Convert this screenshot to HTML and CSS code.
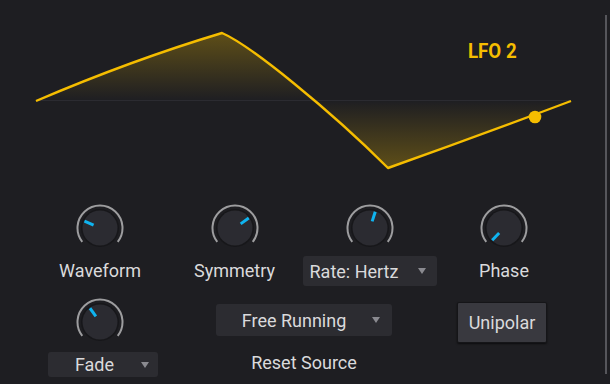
FILE: index.html
```html
<!DOCTYPE html>
<html>
<head>
<meta charset="utf-8">
<link rel="stylesheet" href="styles.css">
</head>
<body>
<div class="panel">
  <div class="graph">
    <svg class="wave" width="605" height="189" viewBox="0 15 605 189">
      <defs>
        <linearGradient id="fillGrad" gradientUnits="userSpaceOnUse" x1="0" y1="33" x2="0" y2="168">
          <stop offset="0" stop-color="#f5c000" stop-opacity="0.30"/>
          <stop offset="0.5" stop-color="#f5c000" stop-opacity="0"/>
          <stop offset="1" stop-color="#f5c000" stop-opacity="0.30"/>
        </linearGradient>
      </defs>
      <line x1="36" y1="100.5" x2="571" y2="100.5" stroke="#2b2b31" stroke-width="1.2"/>
      <path d="M36,101 Q132,60 222,33 C250,45 330,110 388,168 Q478,136 571,101 Z" fill="url(#fillGrad)" stroke="none"/>
      <path d="M36,101 Q132,60 222,33 C250,45 330,110 388,168 Q478,136 571,101" fill="none" stroke="#f5bd00" stroke-width="2.4" stroke-linejoin="round"/>
      <circle cx="535" cy="117" r="6.3" fill="#f5bd00"/>
    </svg>
    <div class="title">LFO 2</div>
  </div>

  <div class="controls">
    <div class="cell c1 r1">
      <svg class="knob" width="48" height="48" viewBox="0 0 48 48">
        <path d="M6.27,37.86 A22.5,22.5 0 1 1 41.73,37.86" fill="none" stroke="#9d9d9f" stroke-width="2"/>
        <circle cx="24" cy="24" r="19" fill="#17171a"/>
        <circle cx="24" cy="24" r="17.5" fill="#2b2b31"/>
        <line x1="24" y1="17" x2="24" y2="7" stroke="#0fb4f0" stroke-width="3" transform="rotate(-66 24 24)"/>
      </svg>
    </div>
    <div class="cell c2 r1">
      <svg class="knob" width="48" height="48" viewBox="0 0 48 48">
        <path d="M6.27,37.86 A22.5,22.5 0 1 1 41.73,37.86" fill="none" stroke="#9d9d9f" stroke-width="2"/>
        <circle cx="24" cy="24" r="19" fill="#17171a"/>
        <circle cx="24" cy="24" r="17.5" fill="#2b2b31"/>
        <line x1="24" y1="17" x2="24" y2="7" stroke="#0fb4f0" stroke-width="3" transform="rotate(54 24 24)"/>
      </svg>
    </div>
    <div class="cell c3 r1">
      <svg class="knob" width="48" height="48" viewBox="0 0 48 48">
        <path d="M6.27,37.86 A22.5,22.5 0 1 1 41.73,37.86" fill="none" stroke="#9d9d9f" stroke-width="2"/>
        <circle cx="24" cy="24" r="19" fill="#17171a"/>
        <circle cx="24" cy="24" r="17.5" fill="#2b2b31"/>
        <line x1="24" y1="17" x2="24" y2="7" stroke="#0fb4f0" stroke-width="3" transform="rotate(18 24 24)"/>
      </svg>
    </div>
    <div class="cell c4 r1">
      <svg class="knob" width="48" height="48" viewBox="0 0 48 48">
        <path d="M6.27,37.86 A22.5,22.5 0 1 1 41.73,37.86" fill="none" stroke="#9d9d9f" stroke-width="2"/>
        <circle cx="24" cy="24" r="19" fill="#17171a"/>
        <circle cx="24" cy="24" r="17.5" fill="#2b2b31"/>
        <line x1="24" y1="17" x2="24" y2="7" stroke="#0fb4f0" stroke-width="3" transform="rotate(-136 24 24)"/>
      </svg>
    </div>

    <div class="cell c1 r2 label">Waveform</div>
    <div class="cell c2 r2 label">Symmetry</div>
    <div class="cell c3 r2">
      <div class="dropdown rate"><span class="dd-text">Rate: Hertz</span><span class="tri"></span></div>
    </div>
    <div class="cell c4 r2 label">Phase</div>

    <div class="cell c1 r3 knob-low">
      <svg class="knob" width="48" height="48" viewBox="0 0 48 48">
        <path d="M6.27,37.86 A22.5,22.5 0 1 1 41.73,37.86" fill="none" stroke="#9d9d9f" stroke-width="2"/>
        <circle cx="24" cy="24" r="19" fill="#17171a"/>
        <circle cx="24" cy="24" r="17.5" fill="#2b2b31"/>
        <line x1="24" y1="17" x2="24" y2="7" stroke="#0fb4f0" stroke-width="3" transform="rotate(-36 24 24)"/>
      </svg>
    </div>
    <div class="cell c23 r3">
      <div class="dropdown free"><span class="dd-text">Free Running</span><span class="tri"></span></div>
    </div>
    <div class="cell c4 r3">
      <div class="button">Unipolar</div>
    </div>

    <div class="cell c1 r4">
      <div class="dropdown fade"><span class="dd-text">Fade</span><span class="tri"></span></div>
    </div>
    <div class="cell c23 r4 label reset">Reset Source</div>
  </div>
</div>
</body>
</html>
```

FILE: styles.css
```css
html, body {
  margin: 0;
  padding: 0;
  background: #1e1e22;
}

body {
  width: 610px;
  height: 384px;
  overflow: hidden;
  font-family: Roboto, "Liberation Sans", sans-serif;
  color: #dadadc;
}

.panel {
  margin-top: 15px;
  width: 605px;
  height: 359px;
  border-right: 2px solid #56565b;
}

.graph {
  position: relative;
  height: 189px;
}

.wave {
  display: block;
}

.title {
  position: absolute;
  left: 468px;
  top: 26px;
  font-size: 21px;
  line-height: 21px;
  font-weight: 700;
  color: #f5bd00;
  transform: scaleX(0.89);
  transform-origin: left top;
  white-space: nowrap;
}

.controls {
  display: grid;
  margin-left: 33px;
  grid-template-columns: 134px 135px 135px 134px;
  grid-template-rows: 48px 38px 60px 30px;
}

.cell {
  display: flex;
  justify-content: center;
  align-items: flex-start;
}

.c1 { grid-column: 1; }
.c2 { grid-column: 2; }
.c3 { grid-column: 3; }
.c4 { grid-column: 4; }
.c23 { grid-column: 2 / span 2; }
.r1 { grid-row: 1; }
.r2 { grid-row: 2; align-items: center; }
.r3 { grid-row: 3; }
.r4 { grid-row: 4; }

.knob {
  display: block;
}

.knob-low {
  padding-top: 8px;
}

.label {
  font-size: 18px;
  line-height: 38px;
  white-space: nowrap;
}

.reset {
  line-height: 26px;
  padding-left: 4px;
}

.dropdown {
  display: flex;
  align-items: center;
  background: #2c2c31;
  border-radius: 3px;
  font-size: 18px;
  color: #dadadc;
  box-sizing: border-box;
}

.dd-text {
  flex: 1;
  text-align: center;
  white-space: nowrap;
}

.tri {
  width: 0;
  height: 0;
  border-left: 4px solid transparent;
  border-right: 4px solid transparent;
  border-top: 6px solid #8a8a90;
}

.rate {
  width: 134px;
  height: 30px;
  padding: 0 11px 0 7px;
}

.rate .dd-text {
  text-align: left;
}

.free {
  width: 176px;
  height: 32px;
  margin-top: 14px;
  margin-left: 4px;
  padding-right: 12px;
}

.fade {
  width: 110px;
  height: 25px;
  margin-top: 2px;
  margin-left: 6px;
  padding-right: 9px;
}

.button {
  width: 90px;
  height: 41px;
  margin-top: 12px;
  margin-right: 4px;
  box-sizing: border-box;
  background: #39393f;
  border: 1px solid #151518;
  border-radius: 2px;
  box-shadow: 0 1px 2px rgba(0,0,0,0.6);
  font-size: 18px;
  line-height: 39px;
  text-align: center;
  color: #dadadc;
}
```
